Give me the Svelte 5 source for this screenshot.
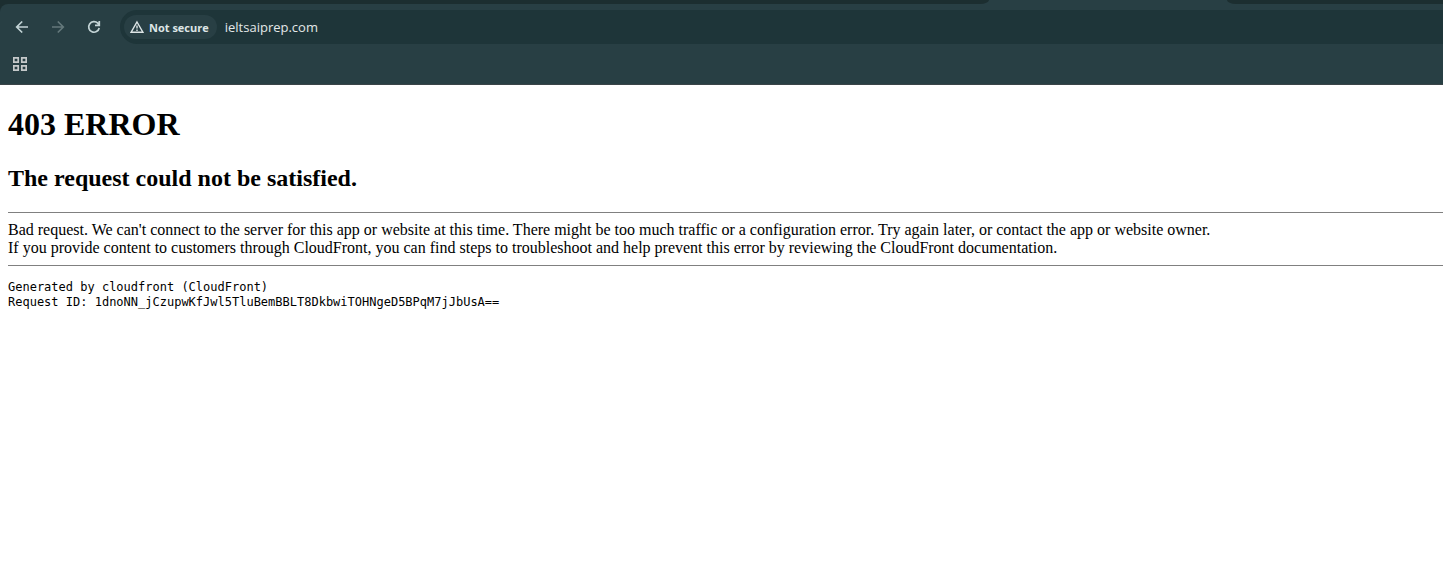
<script>
  const address = 'ieltsaiprep.com';
  const requestId = '1dnoNN_jCzupwKfJwl5TluBemBBLT8DkbwiTOHNgeD5BPqM7jJbUsA==';
</script>

<div class="browser">
  <div class="tabstrip">
    <div class="strip before"></div>
    <div class="tab"></div>
    <div class="strip after"></div>
  </div>
  <header class="chrome">
    <nav class="toolbar" aria-label="Navigation">
      <button class="icon" aria-label="Back">
        <svg width="16" height="16" viewBox="0 0 16 16"><path d="M14 8H3M8.2 2.5 2.7 8l5.5 5.5" /></svg>
      </button>
      <button class="icon" aria-label="Forward" disabled>
        <svg width="16" height="16" viewBox="0 0 16 16"><path d="M2 8h11M7.8 2.5 13.3 8l-5.5 5.5" /></svg>
      </button>
      <button class="icon" aria-label="Reload">
        <svg width="16" height="16" viewBox="0 0 16 16"><path d="M13.2 9A5.3 5.3 0 1 1 11.8 4.2L13.2 5.8M13.3 2v4.4H9" /></svg>
      </button>
      <div class="omnibox">
        <button class="chip">
          <svg width="14" height="14" viewBox="0 0 14 14"><path d="M7 2 13 12.3H1ZM7 5.6v3M7 9.6v1.3" /></svg>
          <span>Not secure</span>
        </button>
        <input type="text" value={address} aria-label="Address" spellcheck="false" />
      </div>
    </nav>
    <div class="bookmarks">
      <button class="icon apps" aria-label="Apps">
        <svg width="14" height="14" viewBox="0 0 14 14"><path d="M.8.8h4.4v4.4H.8ZM8.8.8h4.4v4.4H8.8ZM.8 8.8h4.4v4.4H.8ZM8.8 8.8h4.4v4.4H8.8Z" /></svg>
      </button>
    </div>
  </header>
</div>

<main>
  <h1>403 ERROR</h1>
  <h2>The request could not be satisfied.</h2>
  <hr />
  <p>
    Bad request. We can't connect to the server for this app or website at this time. There might be too much traffic or a configuration error. Try again later, or contact the app or website owner.
    <br />
    If you provide content to customers through CloudFront, you can find steps to troubleshoot and help prevent this error by reviewing the CloudFront documentation.
  </p>
  <hr />
  <pre>Generated by cloudfront (CloudFront)
Request ID: {requestId}</pre>
</main>

<style>
  :global(body) {
    background: #fff;
  }
  .browser {
    background: #1c2e30;
    font-family: 'Open Sans', 'Noto Sans', sans-serif;
  }
  .tabstrip {
    display: flex;
    height: 4px;
    background: #283f44;
  }
  .strip {
    background: #1c2e30;
  }
  .before {
    flex: 989;
    border-bottom-right-radius: 9px 4px;
  }
  .tab {
    flex: 238;
  }
  .after {
    flex: 216;
    border-bottom-left-radius: 9px 4px;
  }
  .chrome {
    background: #283f44;
    border-top-left-radius: 8px;
    border-bottom: 1px solid #3a4448;
  }
  .toolbar {
    display: flex;
    align-items: center;
    padding: 6px 0 0 4px;
  }
  button {
    border: 0;
    margin: 0;
    padding: 0;
    background: none;
    font: inherit;
  }
  .icon {
    display: flex;
    align-items: center;
    justify-content: center;
    width: 36px;
    height: 32px;
    color: #c3d4d6;
  }
  .icon:disabled {
    color: #64787b;
  }
  svg {
    display: block;
    flex: none;
    fill: none;
    stroke: currentColor;
    stroke-width: 1.7;
  }
  .omnibox {
    display: flex;
    flex: 1;
    align-items: center;
    gap: 8px;
    height: 34px;
    margin-left: 8px;
    padding-left: 4px;
    box-sizing: border-box;
    border-radius: 17px 0 0 17px;
    background: #1e3539;
  }
  .chip {
    display: flex;
    align-items: center;
    gap: 5px;
    height: 24px;
    padding: 0 8px 0 6px;
    border-radius: 12px;
    background: #283f44;
    color: #dde5e6;
    font-size: 11px;
    font-weight: 700;
    white-space: nowrap;
  }
  .chip svg {
    stroke-width: 1.4;
  }
  input {
    flex: 1;
    min-width: 0;
    border: 0;
    padding: 0;
    outline: 0;
    background: none;
    color: #e3e8e8;
    font: 13px 'Open Sans', 'Noto Sans', sans-serif;
  }
  .bookmarks {
    display: flex;
    align-items: center;
    height: 40px;
    padding-left: 2px;
  }
  .apps {
    color: #c5c9ca;
  }
  main {
    padding: 0 0 16px 8px;
    color: #000;
    font: 16px/18px 'Liberation Serif', 'Times New Roman', serif;
  }
  h1 {
    margin: 0;
    padding-top: 21px;
    font-size: 32px;
    line-height: 37px;
  }
  h2 {
    margin: 22px 0 20px;
    font-size: 24px;
    line-height: 27px;
  }
  hr {
    height: 1px;
    margin: 8px 0;
    border: 0;
    background: #808080;
  }
  p {
    margin: 0;
  }
  pre {
    margin: 14px 0;
    font: 12px/15px 'DejaVu Sans Mono', monospace;
  }
</style>
